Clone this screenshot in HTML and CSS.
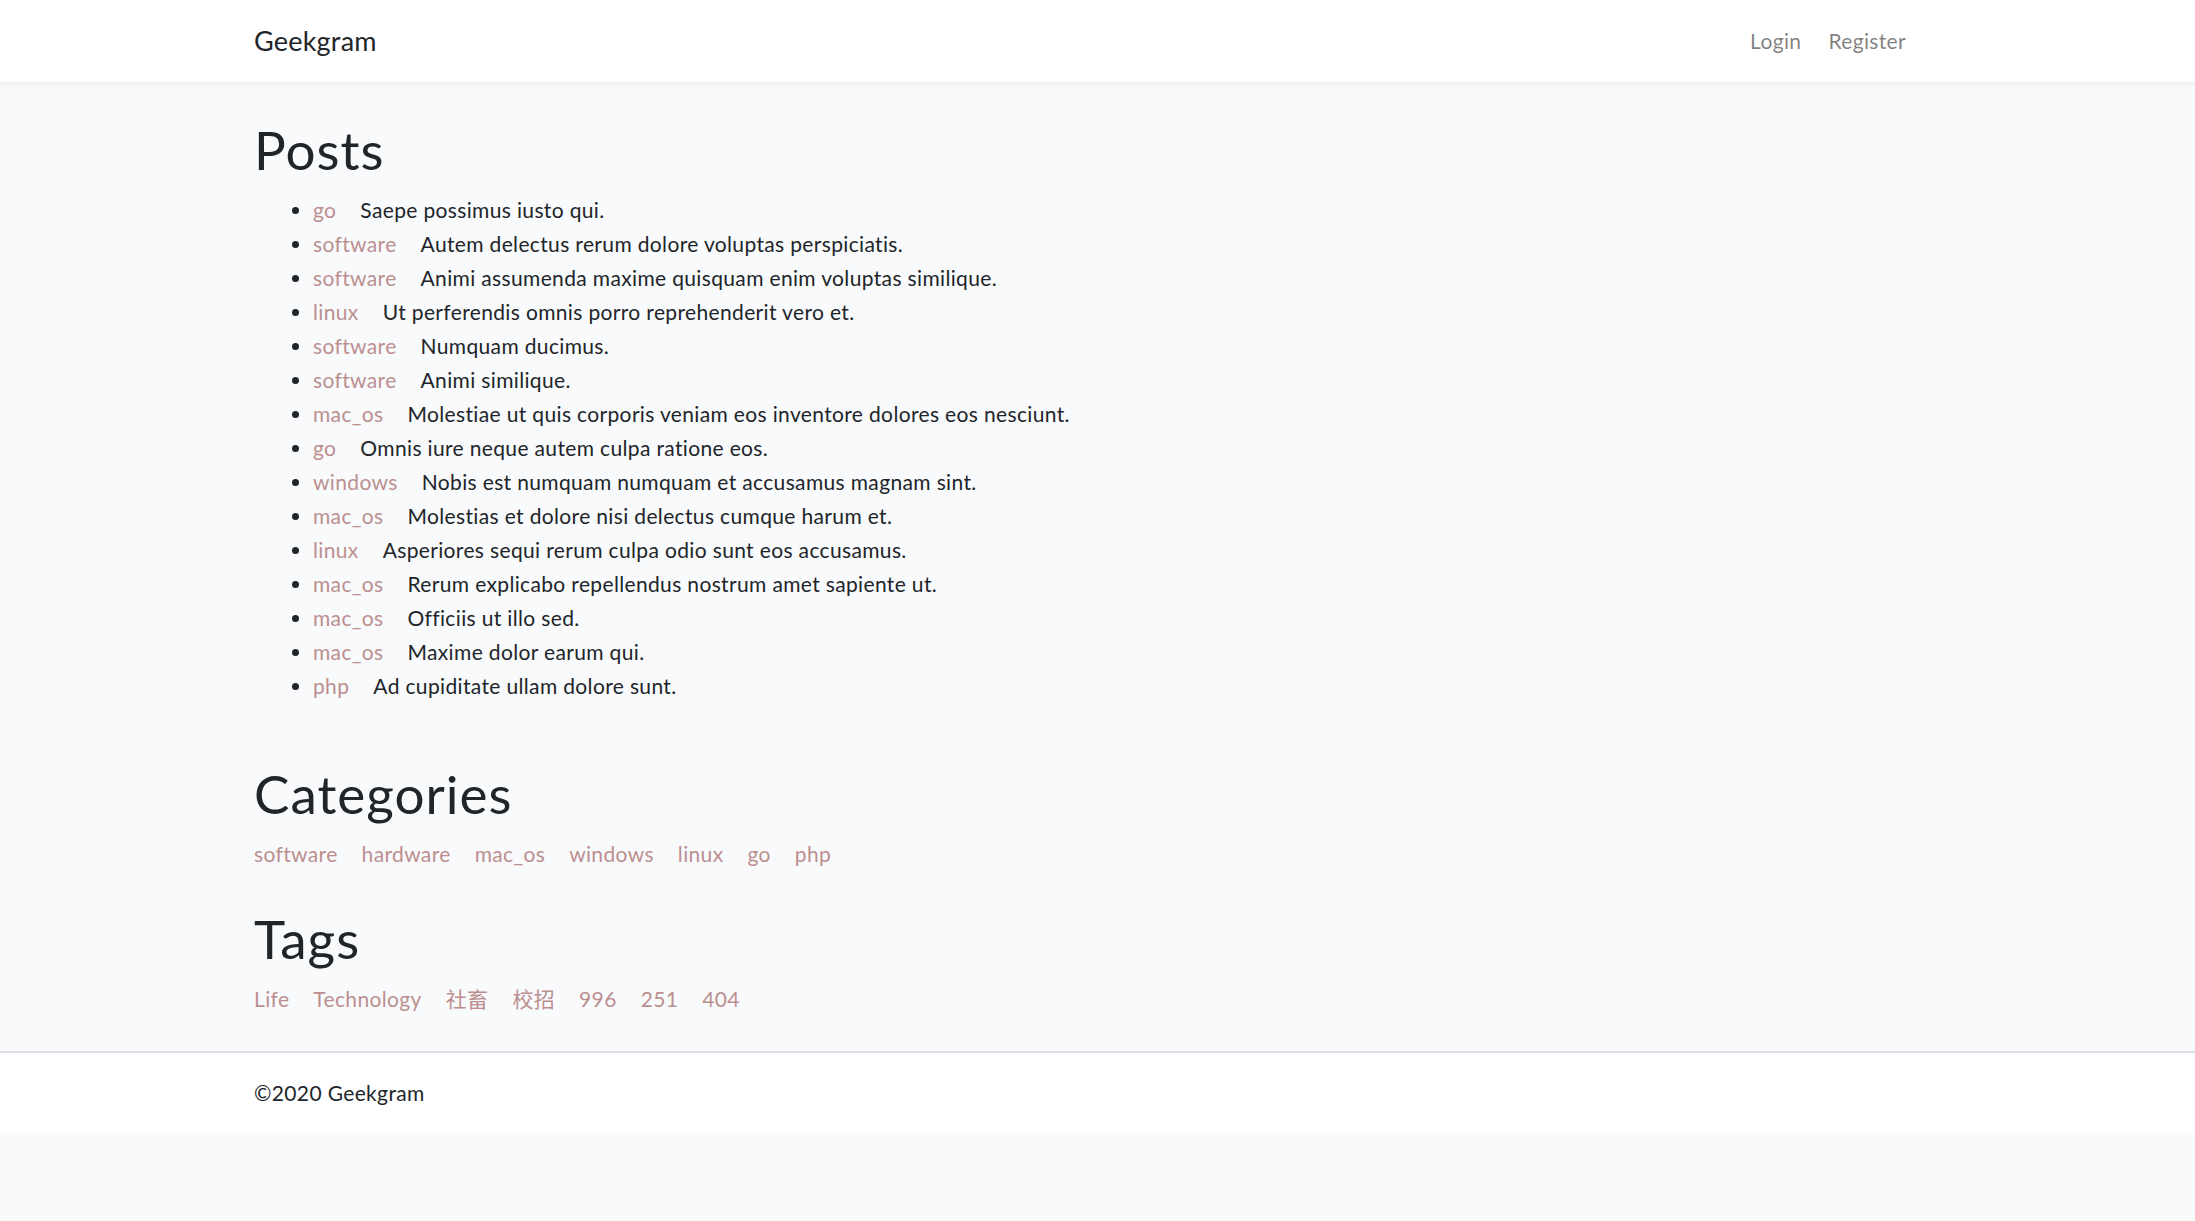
FILE: index.html
```html
<!DOCTYPE html>
<html lang="en">
<head>
<meta charset="utf-8">
<title>Geekgram</title>
<link rel="stylesheet" href="styles.css">
</head>
<body>
<nav class="navbar">
  <div class="container nav-inner">
    <a class="brand" href="#">Geekgram</a>
    <ul class="nav-links">
      <li><a href="#">Login</a></li>
      <li><a href="#">Register</a></li>
    </ul>
  </div>
</nav>
<main class="container main">
  <h1 class="heading">Posts</h1>
  <ul class="posts">
    <li><a class="tag" href="#">go</a>Saepe possimus iusto qui.</li>
    <li><a class="tag" href="#">software</a>Autem delectus rerum dolore voluptas perspiciatis.</li>
    <li><a class="tag" href="#">software</a>Animi assumenda maxime quisquam enim voluptas similique.</li>
    <li><a class="tag" href="#">linux</a>Ut perferendis omnis porro reprehenderit vero et.</li>
    <li><a class="tag" href="#">software</a>Numquam ducimus.</li>
    <li><a class="tag" href="#">software</a>Animi similique.</li>
    <li><a class="tag" href="#">mac_os</a>Molestiae ut quis corporis veniam eos inventore dolores eos nesciunt.</li>
    <li><a class="tag" href="#">go</a>Omnis iure neque autem culpa ratione eos.</li>
    <li><a class="tag" href="#">windows</a>Nobis est numquam numquam et accusamus magnam sint.</li>
    <li><a class="tag" href="#">mac_os</a>Molestias et dolore nisi delectus cumque harum et.</li>
    <li><a class="tag" href="#">linux</a>Asperiores sequi rerum culpa odio sunt eos accusamus.</li>
    <li><a class="tag" href="#">mac_os</a>Rerum explicabo repellendus nostrum amet sapiente ut.</li>
    <li><a class="tag" href="#">mac_os</a>Officiis ut illo sed.</li>
    <li><a class="tag" href="#">mac_os</a>Maxime dolor earum qui.</li>
    <li><a class="tag" href="#">php</a>Ad cupiditate ullam dolore sunt.</li>
  </ul>

  <h1 class="heading section-gap">Categories</h1>
  <div class="link-row">
    <a href="#">software</a>
    <a href="#">hardware</a>
    <a href="#">mac_os</a>
    <a href="#">windows</a>
    <a href="#">linux</a>
    <a href="#">go</a>
    <a href="#">php</a>
  </div>

  <h1 class="heading tags-gap">Tags</h1>
  <div class="link-row">
    <a href="#">Life</a>
    <a href="#">Technology</a>
    <a href="#">社畜</a>
    <a href="#">校招</a>
    <a href="#">996</a>
    <a href="#">251</a>
    <a href="#">404</a>
  </div>
</main>
<footer class="footer">
  <div class="container">©2020 Geekgram</div>
</footer>
</body>
</html>
```

FILE: styles.css
```css
html, body {
  margin: 0;
  padding: 0;
}

body {
  background: #f8fafc;
  color: #212529;
  font-family: Lato, "Noto Sans", "Noto Sans CJK SC", sans-serif;
  font-size: 21px;
  line-height: 34px;
  letter-spacing: 0.35px;
}

a {
  text-decoration: none;
}

.container {
  padding: 0 254px;
}

.navbar {
  background: #ffffff;
  height: 82px;
  box-shadow: 0 3px 6px rgba(0, 0, 0, 0.05);
  position: relative;
}

.nav-inner {
  height: 82px;
  display: flex;
  align-items: center;
  justify-content: space-between;
}

.brand {
  color: #212529;
  font-size: 27px;
  line-height: 40px;
  letter-spacing: 0.2px;
}

.nav-links {
  list-style: none;
  margin: 0 35px 0 0;
  padding: 0;
  display: flex;
  gap: 27px;
}

.nav-links a {
  color: rgba(0, 0, 0, 0.5);
}

.main {
  padding-top: 36px;
  padding-bottom: 35px;
}

.heading {
  font-size: 53px;
  line-height: 64px;
  font-weight: 400;
  letter-spacing: 1px;
  margin: 0 0 11px 0;
}

.section-gap {
  margin-top: 59px;
}

.tags-gap {
  margin-top: 36px;
}

.posts {
  margin: 0;
  padding-left: 59px;
}

.tag {
  color: #bc8f8f;
  margin-right: 24px;
}

.link-row {
  display: flex;
  flex-wrap: wrap;
  gap: 0 24px;
}

.link-row a {
  color: #bc8f8f;
}

.footer {
  background: #ffffff;
  border-top: 2px solid #dee2e6;
  padding: 23px 0 25px 0;
}
```
